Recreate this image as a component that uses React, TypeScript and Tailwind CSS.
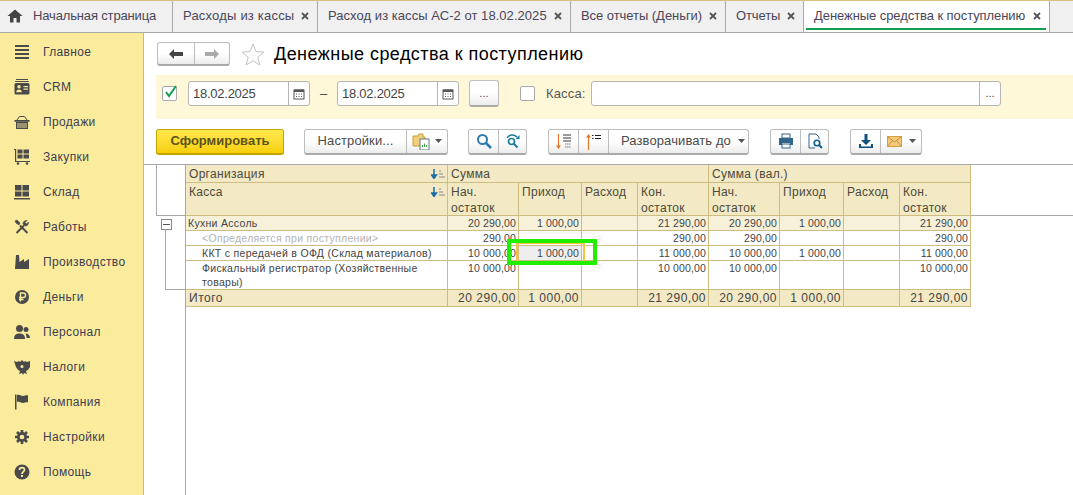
import React from "react";

const font = { fontFamily: '"Liberation Sans", Arial, sans-serif' };

function Hamburger() {
  return <svg width="16" height="16" viewBox="0 0 16 16" fill="#4a4a4a"><rect x="1" y="1" width="14" height="2"/><rect x="1" y="5" width="14" height="2"/><rect x="1" y="9" width="14" height="2"/><rect x="1" y="13" width="14" height="2"/></svg>;
}
function Crm() {
  return <svg width="16" height="16" viewBox="0 0 16 16"><path d="M2 .5h12M1.200 2.500h13.600" stroke="#4a4a4a" strokeWidth="1" fill="none"/><rect x="0.500" y="4" width="15" height="11.500" rx="1.500" fill="#4a4a4a"/><circle cx="5" cy="7.800" r="1.700" fill="#fbec9d"/><path d="M2.200 13.200c0-2 1.200-2.800 2.800-2.800s2.800.8 2.800 2.800z" fill="#fbec9d"/><rect x="9.500" y="7" width="4.500" height="1.200" fill="#fbec9d"/><rect x="9.500" y="9.500" width="4.500" height="1.200" fill="#fbec9d"/></svg>;
}
function Basket() {
  return <svg width="16" height="16" viewBox="0 0 16 16" fill="none" stroke="#4a4a4a"><path d="M3 6 5.500 2.500h5L13 6" strokeWidth="1"/><rect x="0.500" y="6" width="15" height="1.800" fill="#4a4a4a" stroke="none"/><path d="M2 8h12v7H2z" fill="#4a4a4a" stroke="none"/><path d="M4 9v5M6 9v5M8 9v5M10 9v5M12 9v5" stroke="#fbec9d" strokeWidth="0.900"/></svg>;
}
function Cart() {
  return <svg width="16" height="16" viewBox="0 0 16 16" fill="#4a4a4a"><path d="M0 0h2.200v12H16v1H1V1H0z"/><rect x="3.500" y="0.500" width="5" height="4"/><rect x="9.500" y="0.500" width="5.500" height="4"/><rect x="3.500" y="5.500" width="5" height="4"/><rect x="9.500" y="5.500" width="5.500" height="4"/><circle cx="4" cy="14.500" r="1.300"/><circle cx="13" cy="14.500" r="1.300"/></svg>;
}
function Warehouse() {
  return <svg width="16" height="16" viewBox="0 0 16 16" fill="#4a4a4a"><rect x="1" y="1" width="6.500" height="5.500"/><rect x="8.500" y="1" width="6.500" height="5.500"/><rect x="1" y="7.500" width="6.500" height="5"/><rect x="8.500" y="7.500" width="6.500" height="5"/><rect x="0" y="14" width="16" height="1.500"/></svg>;
}
function Tools() {
  return <svg width="16" height="16" viewBox="0 0 16 16" fill="none" stroke="#4a4a4a"><path d="M2.500 14 10 6.500" strokeWidth="2"/><path d="M9 5c-.2-2 1.500-3.800 4-3.500L11 3.500l1.500 1.500 2-2c.3 2.500-1.500 4.200-3.500 4z" fill="#4a4a4a" strokeWidth="0.600"/><path d="M13.500 14 6 6.500" strokeWidth="2"/><path d="M1 2l2-1 3 3-1 2-3-2z" fill="#4a4a4a" strokeWidth="0.600"/></svg>;
}
function Factory() {
  return <svg width="16" height="16" viewBox="0 0 16 16" fill="#4a4a4a"><path d="M1 15 2 1h3l.5 7L10 5v3l5-3v10z"/></svg>;
}
function Ruble() {
  return <svg width="16" height="16" viewBox="0 0 16 16"><circle cx="8" cy="8" r="7" fill="#4a4a4a"/><path d="M6.500 12.500V4h2.800a2.200 2.200 0 0 1 0 4.500H5M5 10.500h4.500" stroke="#fbec9d" strokeWidth="1.400" fill="none"/></svg>;
}
function People() {
  return <svg width="16" height="16" viewBox="0 0 16 16" fill="#4a4a4a"><circle cx="5.500" cy="4.500" r="3.500"/><path d="M0 15c0-4 2-5.500 5.500-5.500S11 11 11 15z"/><circle cx="12" cy="5.500" r="2.500"/><path d="M11.500 9.500c2.500 0 4.500 1.500 4.500 4.500h-3.500c0-2-.3-3.300-1-4.500z"/></svg>;
}
function Eagle() {
  return <svg width="16" height="16" viewBox="0 0 16 16" fill="#4a4a4a"><path d="M0 2l3 1 2-1 1 1 2-2 2 2 1-1 2 1 3-1v6l-2 3-2 1 1 3-3-1-1 2-1-2-3 1 1-3-2-1-2-3z"/><circle cx="8" cy="7.500" r="1.500" fill="#fbec9d"/></svg>;
}
function Flag() {
  return <svg width="16" height="16" viewBox="0 0 16 16" fill="#4a4a4a"><rect x="1" y="0.500" width="1.500" height="15"/><path d="M3 1c3-1 4 1 6 1s3-1 5-.5v7c-2-.5-3 .5-5 .5s-3-2-6-1z"/></svg>;
}
function Gear() {
  return <svg width="16" height="16" viewBox="0 0 16 16"><path d="M8 1v14M1 8h14M3 3l10 10M13 3 3 13" stroke="#4a4a4a" strokeWidth="2.600"/><circle cx="8" cy="8" r="5" fill="#4a4a4a"/><circle cx="8" cy="8" r="2.300" fill="#fbec9d"/></svg>;
}
function Help() {
  return <svg width="16" height="16" viewBox="0 0 16 16"><circle cx="8" cy="8" r="7.500" fill="#4a4a4a"/><path d="M5.500 6c0-1.500 1.200-2.300 2.500-2.300S10.500 4.500 10.500 6 8 8 8 10" stroke="#fbec9d" strokeWidth="1.700" fill="none"/><rect x="7" y="11" width="2" height="2" fill="#fbec9d"/></svg>;
}

const navItems: [string, React.ReactNode][] = [
  ["Главное", <Hamburger />], ["CRM", <Crm />], ["Продажи", <Basket />], ["Закупки", <Cart />],
  ["Склад", <Warehouse />], ["Работы", <Tools />], ["Производство", <Factory />], ["Деньги", <Ruble />],
  ["Персонал", <People />], ["Налоги", <Eagle />], ["Компания", <Flag />], ["Настройки", <Gear />], ["Помощь", <Help />],
];

function Close() {
  return <svg width="8" height="8" viewBox="0 0 8 8" className="shrink-0"><path d="M1 1l6 6M7 1 1 7" stroke="#555" strokeWidth="1.800"/></svg>;
}

function Tab({ label, width, track = "", closable = true, active = false, home = false }: { label: string; width: string; track?: string; closable?: boolean; active?: boolean; home?: boolean }) {
  return (
    <div className={`${width} relative flex items-center border-r border-[#a9a9a9] h-full pb-[2px] ${active ? "bg-white" : ""}`}>
      {home && (
        <svg width="16" height="14" viewBox="0 0 16 14" className="ml-[7px] mr-[10px] shrink-0"><path d="M8 .5 15.500 7H13v6.500H9.500V9h-3v4.500H3V7H.5z" fill="#444"/></svg>
      )}
      <span className={`${home ? "" : "ml-[10px]"} text-[13px] ${track} text-[#4a4658] whitespace-nowrap`}>{label}</span>
      {closable && <span className="ml-auto mr-[8px] flex"><Close /></span>}
      {active && <div className="absolute left-[2px] right-[3px] bottom-[2px] h-[2px] bg-[#10a050]" />}
    </div>
  );
}

function Btn({ className = "", children }: { className?: string; children: React.ReactNode }) {
  return (
    <div className={`flex items-center justify-center h-[26px] bg-gradient-to-b from-white via-white to-[#ececec] border border-[#bdbdbd] border-b-2 border-b-[#a9a9a9] rounded-[3px] text-[13px] tracking-[0.1px] text-[#4a4a4a] ${className}`}>
      {children}
    </div>
  );
}

function Sep({ className = "", children }: { className?: string; children: React.ReactNode }) {
  return <div className={`flex items-center justify-center h-full border-r border-[#bdbdbd] last:border-r-0 ${className}`}>{children}</div>;
}

function Caret() {
  return <svg width="7" height="4" viewBox="0 0 7 4" className="shrink-0"><path d="M0 0h7L3.500 4z" fill="#555" /></svg>;
}

function Calendar() {
  return <svg width="12" height="12" viewBox="0 0 12 12"><rect x="1" y="2" width="10" height="9" fill="none" stroke="#555"/><rect x="1" y="1.500" width="10" height="2.500" fill="#555"/><path d="M3 6h1M5.500 6h1M8 6h1M3 8.500h1M5.500 8.500h1M8 8.500h1" stroke="#555"/></svg>;
}

function DateField() {
  return (
    <div className="flex w-[122px] h-[25px] bg-white border border-[#b5b5b5] rounded-[3px] shrink-0">
      <div className="flex-1 pl-[4px] text-[13px] leading-[23px] tracking-[-0.25px] text-[#444]">18.02.2025</div>
      <div className="w-[21px] border-l border-[#b5b5b5] flex items-center justify-center"><Calendar /></div>
    </div>
  );
}

const cols = [262, 71, 63, 56, 71, 71, 64, 56, 71];
const hdr = "border-r border-b border-[#cdbd80] bg-[#f3e9c4] text-[12px] leading-[16px] tracking-[0.3px] text-[#4a4a3a] align-top px-[3px] pt-[1px] font-normal text-left";

function SortIcon() {
  return <svg width="15" height="10" viewBox="0 0 15 10" className="shrink-0"><path d="M3 0v7M.5 6 3 9.500 5.500 6z" stroke="#1d6fa8" strokeWidth="1.500" fill="#1d6fa8"/><path d="M8 2h2M8 5h4M8 8h6" stroke="#888" strokeWidth="1"/></svg>;
}

type Row = { name: string; indent?: boolean; muted?: boolean; vals: string[]; h: string; kind: "group" | "item" | "total"; };
const rows: Row[] = [
  { name: "Кухни Ассоль", vals: ["20 290,00", "1 000,00", "", "21 290,00", "20 290,00", "1 000,00", "", "21 290,00"], h: "h-[15px]", kind: "group" },
  { name: "<Определяется при поступлении>", muted: true, indent: true, vals: ["290,00", "", "", "290,00", "290,00", "", "", "290,00"], h: "h-[15px]", kind: "item" },
  { name: "ККТ с передачей в ОФД (Склад материалов)", indent: true, vals: ["10 000,00", "1 000,00", "", "11 000,00", "10 000,00", "1 000,00", "", "11 000,00"], h: "h-[15px]", kind: "item" },
  { name: "Фискальный регистратор (Хозяйственные товары)", indent: true, vals: ["10 000,00", "", "", "10 000,00", "10 000,00", "", "", "10 000,00"], h: "h-[29px]", kind: "item" },
  { name: "Итого", vals: ["20 290,00", "1 000,00", "", "21 290,00", "20 290,00", "1 000,00", "", "21 290,00"], h: "h-[17px]", kind: "total" },
];

function ReportTable() {
  return (
    <table className="border-separate border-spacing-0 table-fixed w-[785px]">
      <colgroup>
        {cols.map((w, i) => <col key={i} style={{ width: w }} />)}
      </colgroup>
      <thead>
        <tr className="h-[18px]">
          <th className={hdr}><div className="flex items-center justify-between -mr-[2px]"><span>Организация</span><SortIcon /></div></th>
          <th colSpan={4} className={hdr}>Сумма</th>
          <th colSpan={4} className={hdr}>Сумма (вал.)</th>
        </tr>
        <tr className="h-[33px]">
          <th className={hdr}><div className="flex items-center justify-between -mr-[2px]"><span>Касса</span><SortIcon /></div></th>
          {["Нач. остаток", "Приход", "Расход", "Кон. остаток", "Нач. остаток", "Приход", "Расход", "Кон. остаток"].map((t, i) => (
            <th key={i} className={hdr}><div className="-mb-[1px]">{t}</div></th>
          ))}
        </tr>
      </thead>
      <tbody>
        {rows.map((r, ri) => {
          const bg = r.kind === "group" ? "bg-[#f7f1da]" : r.kind === "total" ? "bg-[#f3e9c4]" : "bg-white";
          const size = r.kind === "total" ? "text-[12px] tracking-[0.5px] leading-[16px]" : "text-[10.500px] leading-[14px]";
          return (
            <tr key={ri} className={r.h}>
              <td className={`${bg} ${size} ${r.kind === "total" ? "" : "tracking-[0.3px]"} border-r border-b border-[#cdbd80] align-top whitespace-normal ${r.kind === "total" ? "pl-[3px]" : r.indent ? "pl-[16px] pr-[3px]" : "pl-[2px]"} ${r.muted ? "text-[#b4b4b4]" : "text-[#444]"}`}>
                {r.name}
              </td>
              {r.vals.map((v, i) => {
                const sel = ri === 2 && i === 1;
                return (
                  <td key={i} className={`${sel ? "bg-[#eeeeee]" : bg} ${size} ${r.kind === "total" ? "" : "tracking-[0.15px]"} border-r border-b border-[#cdbd80] align-top text-right pr-[2px] text-[#444] whitespace-nowrap`}>
                    {v}
                  </td>
                );
              })}
            </tr>
          );
        })}
      </tbody>
    </table>
  );
}

export default function App() {
  return (
    <div style={font} className="w-[1073px] h-[495px] overflow-hidden flex flex-col bg-white relative">
      <div className="h-[33px] shrink-0 flex bg-[#f0f0f0] border-t border-t-[#d6c47e] border-b border-b-[#a9a9a9]">
        <Tab home label="Начальная страница" width="w-[173px]" track="tracking-[-0.15px]" closable={false} />
        <Tab label="Расходы из кассы" width="w-[145px]" track="tracking-[0.2px]" />
        <Tab label="Расход из кассы АС-2 от 18.02.2025" width="w-[253px]" track="tracking-[0.05px]" />
        <Tab label="Все отчеты (Деньги)" width="w-[155px]" track="tracking-[-0.05px]" />
        <Tab label="Отчеты" width="w-[78px]" track="tracking-[-0.1px]" />
        <Tab active label="Денежные средства к поступлению" width="w-[246px]" track="tracking-[-0.07px]" />
      </div>
      <div className="flex-1 flex min-h-0">
        <aside className="w-[144px] shrink-0 bg-[#fbec9d] border-r border-[#bdb9a0] pt-[1px]">
          {navItems.map(([label, icon]) => (
            <div key={label} className="h-[35px] flex items-center pl-[14px]">
              <span className="w-[16px] h-[16px] flex shrink-0">{icon}</span>
              <span className="ml-[13px] text-[12px] tracking-[0.35px] text-[#403c50]">{label}</span>
            </div>
          ))}
        </aside>
        <main className="flex-1 min-w-0 flex flex-col">
          <div className="h-[42px] shrink-0 flex items-center pl-[13px]">
            <Btn className="w-[73px] !h-[24px]">
              <Sep className="w-[37px]"><svg width="14" height="10" viewBox="0 0 14 10"><path d="M0 5l5-5v3h9v4H5v3z" fill="#444"/></svg></Sep>
              <Sep className="flex-1"><svg width="14" height="10" viewBox="0 0 14 10"><path d="M14 5 9 0v3H0v4h9v3z" fill="#aaa"/></svg></Sep>
            </Btn>
            <svg width="24" height="23" viewBox="0 0 24 23" className="ml-[11px]"><path d="M12 1l3 7.500 8 .6-6.200 5.100 2 7.800L12 17.800 5.200 22l2-7.800L1 9.100l8-.6z" fill="#fdfdfd" stroke="#c4c4c4"/></svg>
            <h1 className="ml-[9px] text-[18px] tracking-[0.45px] text-black font-normal leading-none">Денежные средства к поступлению</h1>
          </div>
          <div className="h-[44px] shrink-0 bg-[#fef8d8] flex items-start pt-[5px] pl-[6px] ml-[12px]">
            <div className="h-[27px] flex items-center">
              <div className="w-[15px] h-[15px] border border-[#aaa] rounded-[2px] bg-white relative shrink-0">
                <svg width="14" height="14" viewBox="0 0 14 14" className="absolute -top-[2px] left-[1px]"><path d="M2 7l3 4 7-10" stroke="#10a050" strokeWidth="2" fill="none"/></svg>
              </div>
              <div className="ml-[11px]"><DateField /></div>
              <span className="w-[27px] shrink-0 text-center text-[13px] text-[#444]">–</span>
              <DateField />
              <Btn className="ml-[10px] w-[30px] !h-[27px] shrink-0"><span className="text-[11px]">...</span></Btn>
              <div className="ml-[21px] w-[15px] h-[15px] border border-[#aaa] rounded-[2px] bg-white shrink-0" />
              <span className="ml-[11px] w-[45px] shrink-0 text-[13px] tracking-[0.15px] text-[#555]">Касса:</span>
              <div className="flex w-[410px] h-[25px] bg-white border border-[#b5b5b5] rounded-[3px] shrink-0">
                <div className="flex-1" />
                <div className="w-[21px] border-l border-[#b5b5b5] flex items-center justify-center text-[11px] text-[#444]">...</div>
              </div>
            </div>
          </div>
          <div className="h-[45px] shrink-0 flex items-center pl-[12px]">
            <div className="w-[128px] h-[26px] flex items-center justify-center rounded-[3px] border border-[#c4a400] border-b-2 bg-gradient-to-b from-[#ffe94a] to-[#f7cf00] text-[13px] font-bold text-[#5e5216]">Сформировать</div>
            <Btn className="ml-[20px] w-[144px]">
              <Sep className="w-[102px]">Настройки...</Sep>
              <Sep className="flex-1 gap-[5px]">
                <svg width="18" height="17" viewBox="0 0 18 17"><path d="M1 3h5l1-2h4v3h2v9H1z" fill="#f2cf7b" stroke="#c49a3a"/><rect x="8" y="6" width="9" height="11" fill="#fff" stroke="#678"/><path d="M10.500 14v-2M12.500 14v-3.500M14.500 14v-2" stroke="#4a4"/></svg>
                <Caret />
              </Sep>
            </Btn>
            <Btn className="ml-[20px] w-[59px]">
              <Sep className="w-[30px]"><svg width="16" height="16" viewBox="0 0 16 16"><circle cx="6.500" cy="6.500" r="4.500" fill="none" stroke="#2b7bb0" strokeWidth="2"/><path d="M10 10l5 5" stroke="#2b7bb0" strokeWidth="2.500"/></svg></Sep>
              <Sep className="flex-1"><svg width="16" height="16" viewBox="0 0 16 16" fill="none"><circle cx="6.500" cy="8.500" r="3" stroke="#1a7a9e" strokeWidth="1.700"/><path d="M9 11l3.500 3.500" stroke="#1a7a9e" strokeWidth="2"/><path d="M2 5c2-3.500 7-4 10-1" stroke="#1a7a9e" strokeWidth="1.500"/><path d="M14.500 2v4h-4z" fill="#1a7a9e"/></svg></Sep>
            </Btn>
            <Btn className="ml-[21px] w-[201px]">
              <Sep className="w-[30px]"><svg width="16" height="17" viewBox="0 0 16 17" fill="none"><path d="M2.500 1v14" stroke="#e8742a" strokeWidth="1.200"/><path d="M0 12.500 2.500 16 5 12.500z" fill="#e8742a"/><path d="M7 2h8M7 5h8M7 8h8" stroke="#333" strokeWidth="1"/><path d="M9 11h6M9 14h6" stroke="#777" strokeWidth="1" strokeDasharray="1.500 .5"/></svg></Sep>
              <Sep className="w-[30px]"><svg width="16" height="17" viewBox="0 0 16 17" fill="none"><path d="M2.500 3v14" stroke="#e8742a" strokeWidth="1.200"/><path d="M0 4.500 2.500 1 5 4.500z" fill="#e8742a"/><path d="M6 2.500h1.500M9 2.500h6M6 5.500h1.500M9 5.500h6" stroke="#222" strokeWidth="1.200"/></svg></Sep>
              <Sep className="flex-1 justify-start pl-[12px] gap-[7px]">Разворачивать до <Caret /></Sep>
            </Btn>
            <Btn className="ml-[21px] w-[59px]">
              <Sep className="w-[30px]"><svg width="16" height="16" viewBox="0 0 16 16"><rect x="4" y="1" width="8" height="4" fill="#fff" stroke="#33658a"/><path d="M1 5h14v7h-3v-2H4v2H1z" fill="#33658a"/><rect x="4" y="11" width="8" height="4" fill="#fff" stroke="#33658a"/></svg></Sep>
              <Sep className="flex-1"><svg width="16" height="16" viewBox="0 0 16 16" fill="none"><path d="M2 1h7l3 3v2M2 1v14h6" stroke="#33658a"/><circle cx="10" cy="10" r="2.800" stroke="#0d5e8e" strokeWidth="1.600"/><path d="M12 12l3 3" stroke="#0d5e8e" strokeWidth="2"/></svg></Sep>
            </Btn>
            <Btn className="ml-[21px] w-[72px]">
              <Sep className="w-[30px]"><svg width="16" height="16" viewBox="0 0 16 16" fill="#0d5180"><path d="M6.500 1h3v6H13l-5 5-5-5h3.500z"/><path d="M1 11h2v2.500h10V11h2v4H1z"/></svg></Sep>
              <Sep className="flex-1 gap-[7px]"><svg width="15" height="11" viewBox="0 0 15 11"><rect x="0.500" y="0.500" width="14" height="10" fill="#f3ca7c" stroke="#d79d3e"/><path d="M1 1l6.500 5L14 1M1 10l4-5M14 10l-4-5" stroke="#c98f35" fill="none"/></svg><Caret /></Sep>
            </Btn>
          </div>
          <div className="flex-1 min-h-0 flex flex-col relative">
            <div className="flex border-t border-[#a9a9a9] flex-1 min-h-0">
              <div className="w-[30px] shrink-0 ml-[12px] border-r border-[#a9a9a9] relative">
                <div className="h-[51px] border-l border-b border-[#a9a9a9]" />
                <div className="absolute left-[5px] top-[54px] w-[11px] h-[11px] border border-[#888] bg-white flex items-center justify-center">
                  <div className="w-[7px] h-[1px] bg-[#555]" />
                </div>
                <div className="absolute left-[9px] top-[65px] w-[20px] h-[60px] border-l border-b border-[#a9a9a9]" />
              </div>
              <div className="relative flex-1 min-w-0">
                <div className="absolute left-0 right-0 top-[50px] h-[1px] bg-[#a9a9a9]" />
                <div className="relative"><ReportTable /></div>
              </div>
            </div>
            <div className="absolute left-[372px] top-[79px] w-[69px] h-[19px] border-x-[2px] border-y-[1px] border-[#f9c23c] pointer-events-none" />
            <div className="absolute left-[363px] top-[75px] w-[90px] h-[26px] border-[4px] border-[#22ee00] pointer-events-none" />
          </div>
        </main>
      </div>
    </div>
  );
}
